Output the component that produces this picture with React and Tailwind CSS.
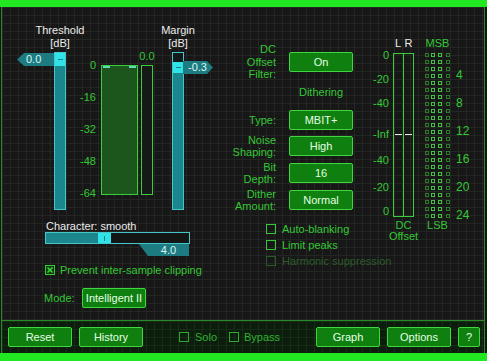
import React from 'react';

function Btn({ children, className = '', w = 'w-[64px]' }) {
  return (
    <div className={`h-[20px] ${w} shrink-0 flex items-center justify-center rounded-[2px] border border-[#3fd63f] bg-[#0f7f0f] text-[#e6ffe6] ${className}`}>
      {children}
    </div>
  );
}

function Check({ checked = false, tone = 'on' }) {
  const cls =
    tone === 'dim'
      ? 'w-[10px] h-[10px] shrink-0 border border-[#2b572b]'
      : tone === 'mid'
      ? 'w-[10px] h-[10px] shrink-0 border border-[#2fa82f]'
      : 'w-[10px] h-[10px] shrink-0 border border-[#36c836]';
  return (
    <div className={cls}>
      {checked && (
        <svg width="8" height="8" viewBox="0 0 8 8" className="block">
          <rect x="0" y="0" width="8" height="8" fill="#0f3a0f" />
          <path d="M1.5 1.5 L6.5 6.5 M6.5 1.5 L1.5 6.5" stroke="#3ad83a" strokeWidth="1.6" />
        </svg>
      )}
    </div>
  );
}

function SettingRow({ lines, value, className = '' }) {
  return (
    <div className={`flex items-center h-[20px] ${className}`}>
      <div className="w-[50px] shrink-0 text-right whitespace-nowrap leading-[12.5px] text-[#34c834]">
        {lines.map((l, i) => (
          <div key={i}>{l}</div>
        ))}
      </div>
      <Btn className="ml-[13px]">{value}</Btn>
    </div>
  );
}

const ledRows = Array.from({ length: 24 }, (_, i) => i);

export default function App() {
  return (
    <div className="w-[487px] h-[361px] bg-[#141414] flex flex-col overflow-hidden text-[11px] leading-[13px] [font-family:'Liberation_Sans',Arial,sans-serif]">
      <div className="h-[7px] shrink-0 bg-[#22e822]" />
      <div className="ml-[1px] w-[484px] h-[346px] shrink-0 border-x border-[#2a8a2a] flex flex-col">
        {/* main area */}
        <div className="h-[313px] shrink-0 flex bg-[#171717] bg-[linear-gradient(to_right,#242624_1px,transparent_1px),linear-gradient(to_bottom,#242624_1px,transparent_1px)] bg-size-[8px_8px]">
          {/* left column */}
          <div className="w-[224px] shrink-0 flex flex-col">
            <div className="mt-[17px] h-[26px] flex text-[#ececec] text-center">
              <div className="ml-[28px] w-[60px]">Threshold<br />[dB]</div>
              <div className="ml-[58px] w-[60px]">Margin<br />[dB]</div>
            </div>
            <div className="mt-[2px] h-[158px] flex items-start">
              {/* threshold slider */}
              <div className="ml-[52px] w-[12px] h-[158px] shrink-0 relative border border-[#45c6ca] bg-[#1b878c] flex flex-col">
                <div className="h-[13px] bg-[#2fe3e8] flex items-center justify-center">
                  <div className="w-[5px] h-[1px] bg-[#168288]" />
                </div>
                <div className="absolute left-[-38px] top-0 w-[37px] h-[13px] bg-[#1d7c82] text-[#dff4f4] pl-[9px] leading-[13px] [clip-path:polygon(7px_0,37px_0,37px_13px,7px_13px,0_6.5px)]">
                  0.0
                </div>
              </div>
              {/* scale */}
              <div className="w-[30px] mt-[7px] shrink-0 flex flex-col text-right text-[#34c834]">
                <div className="h-[32px]">0</div>
                <div className="h-[32px]">-16</div>
                <div className="h-[32px]">-32</div>
                <div className="h-[32px]">-48</div>
                <div className="h-[32px]">-64</div>
              </div>
              {/* meter */}
              <div className="ml-[5px] mt-[13px] w-[37px] h-[130px] shrink-0 relative border border-[#38d038] bg-[#1c561c]">
                <div className="absolute left-[1px] top-0 w-[7px] h-[2px] bg-[#63d6c0]" />
                <div className="absolute right-[1px] top-0 w-[7px] h-[2px] bg-[#63d6c0]" />
              </div>
              {/* thin meter */}
              <div className="ml-[3px] w-[12px] shrink-0 flex flex-col items-center">
                <div className="mt-[-2px] h-[13px] whitespace-nowrap text-[#34c834]">0.0</div>
                <div className="mt-[2px] w-[12px] h-[130px] border border-[#38d038] bg-[#161a16]" />
              </div>
              {/* margin slider */}
              <div className="ml-[19px] w-[12px] h-[158px] shrink-0 relative border border-[#45c6ca] bg-[#1b878c] flex flex-col">
                <div className="h-[9px] bg-[#151818]" />
                <div className="h-[11px] bg-[#2fe3e8] flex items-center justify-center">
                  <div className="w-[5px] h-[1px] bg-[#168288]" />
                </div>
                <div className="absolute left-[10px] top-[8px] w-[30px] h-[13px] bg-[#1d7c82] text-[#dff4f4] pl-[5px] leading-[13px] [clip-path:polygon(0_0,24px_0,30px_6.5px,24px_13px,0_13px)]">
                  -0.3
                </div>
              </div>
            </div>
            {/* character */}
            <div className="mt-[10px] ml-[44px] h-[12px] leading-[12px] text-[#ececec]">Character: smooth</div>
            <div className="ml-[43px] w-[145px] h-[12px] border border-[#45c6ca] flex bg-[#141616]">
              <div className="w-[52px] bg-[#1b878c]" />
              <div className="w-[13px] bg-[#2fe3e8] flex items-center justify-center">
                <div className="w-[1px] h-[5px] bg-[#168288]" />
              </div>
            </div>
            <div className="ml-[137px] w-[50px] h-[12px] bg-[#1d7c82] text-[#dff4f4] pl-[9px] text-center leading-[12px] [clip-path:polygon(0_0,50px_0,50px_12px,9px_12px)]">
              4.0
            </div>
            <div className="mt-[9px] ml-[43px] h-[10px] flex items-center gap-[5px] text-[#34c834] whitespace-nowrap">
              <Check checked />
              <span>Prevent inter-sample clipping</span>
            </div>
            <div className="mt-[13px] ml-[42px] flex items-center">
              <div className="w-[38px] text-[#34c834]">Mode:</div>
              <Btn>Intelligent II</Btn>
            </div>
          </div>

          {/* middle column */}
          <div className="w-[133px] shrink-0 flex flex-col">
            <SettingRow className="mt-[45px]" lines={['DC', 'Offset', 'Filter:']} value="On" />
            <div className="mt-[14px] ml-[63px] w-[64px] text-center text-[#34c834]">Dithering</div>
            <SettingRow className="mt-[11px]" lines={['Type:']} value="MBIT+" />
            <SettingRow className="mt-[6px]" lines={['Noise', 'Shaping:']} value="High" />
            <SettingRow className="mt-[7px]" lines={['Bit', 'Depth:']} value="16" />
            <SettingRow className="mt-[7px]" lines={['Dither', 'Amount:']} value="Normal" />
            <div className="mt-[14px] ml-[40px] h-[10px] flex items-center gap-[6px] text-[#34c834] whitespace-nowrap">
              <Check />
              <span>Auto-blanking</span>
            </div>
            <div className="mt-[6px] ml-[40px] h-[10px] flex items-center gap-[6px] text-[#34c834] whitespace-nowrap">
              <Check />
              <span>Limit peaks</span>
            </div>
            <div className="mt-[6px] ml-[40px] h-[10px] flex items-center gap-[6px] text-[#2d5c2d] whitespace-nowrap">
              <Check tone="dim" />
              <span>Harmonic suppression</span>
            </div>
          </div>

          {/* right column */}
          <div className="w-[124px] shrink-0 flex flex-col">
            <div className="mt-[30px] h-[13px] flex">
              <div className="ml-[34px] w-[21px] flex text-[#ececec]">
                <span className="w-[10px] text-center">L</span>
                <span className="w-[11px] text-center">R</span>
              </div>
              <div className="ml-[11px] w-[25px] text-center text-[#34c834]">MSB</div>
            </div>
            <div className="mt-[3px] h-[165px] flex items-start">
              <div className="w-[30px] shrink-0 flex flex-col text-right text-[#34c834] whitespace-nowrap">
                <div className="mt-[-4px]">0</div>
                <div className="mt-[11px]">-20</div>
                <div className="mt-[11px]">-40</div>
                <div className="mt-[18px]">-Inf</div>
                <div className="mt-[13px]">-40</div>
                <div className="mt-[14px]">-20</div>
                <div className="mt-[11px]">0</div>
              </div>
              <div className="ml-[4px] w-[21px] h-[164px] shrink-0 relative border border-[#38d038]">
                <div className="absolute left-[9px] top-0 w-[1px] h-full bg-[#38d038]" />
                <div className="absolute left-[1px] top-[80px] w-[7px] h-[1px] bg-[#e8e8e8]" />
                <div className="absolute left-[11px] top-[80px] w-[7px] h-[1px] bg-[#e8e8e8]" />
              </div>
              <div className="ml-[11px] shrink-0 flex flex-col gap-[3px]">
                {ledRows.map((r) => (
                  <div key={r} className="flex h-[4px]">
                    <div className="w-[4px] h-[4px] border border-[#2a7a2a]" />
                    <div className="ml-[2px] w-[4px] h-[4px] border border-[#44c044]" />
                    <div className="ml-[3px] w-[4px] h-[4px] border border-[#44c044]" />
                    <div className="ml-[4px] w-[4px] h-[4px] border border-[#2a7a2a]" />
                  </div>
                ))}
              </div>
              <div className="ml-[6px] mt-[16px] flex flex-col gap-[15px] text-[#34c834] text-[12px]">
                <div>4</div>
                <div>8</div>
                <div>12</div>
                <div>16</div>
                <div>20</div>
                <div>24</div>
              </div>
            </div>
            <div className="mt-[2px] flex leading-[11px] text-[#34c834]">
              <div className="ml-[34px] w-[21px] flex flex-col items-center">
                <div>DC</div>
                <div>Offset</div>
              </div>
              <div className="ml-[11px] w-[25px] text-center">LSB</div>
            </div>
          </div>
        </div>

        <div className="h-[1px] shrink-0 bg-[#2a8a2a]" />

        {/* bottom bar */}
        <div className="h-[32px] shrink-0 flex items-start pt-[6px] bg-[#0d1d0d] bg-[linear-gradient(to_right,#152c15_1px,transparent_1px),linear-gradient(to_bottom,#152c15_1px,transparent_1px)] bg-size-[8px_8px]">
          <Btn className="ml-[6px]">Reset</Btn>
          <Btn className="ml-[7px]">History</Btn>
          <div className="ml-[36px] h-[20px] flex items-center text-[#30b030]">
            <Check tone="mid" />
            <span className="ml-[6px]">Solo</span>
            <div className="ml-[12px]">
              <Check tone="mid" />
            </div>
            <span className="ml-[5px]">Bypass</span>
          </div>
          <div className="ml-auto mr-[4px] flex gap-[7px]">
            <Btn>Graph</Btn>
            <Btn>Options</Btn>
            <Btn w="w-[22px]">?</Btn>
          </div>
        </div>
      </div>
      <div className="h-[8px] shrink-0 bg-[#22e822]" />
    </div>
  );
}
